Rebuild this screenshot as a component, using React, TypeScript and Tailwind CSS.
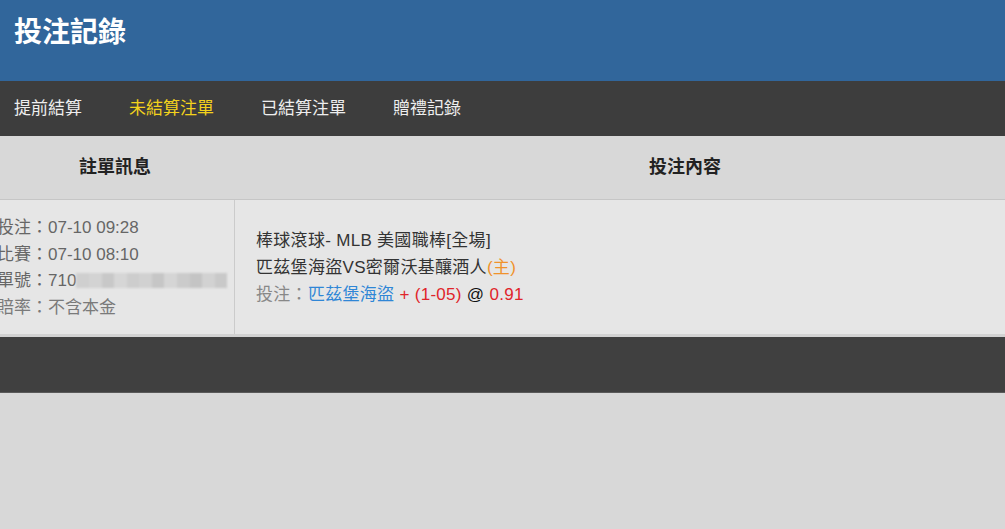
const cjk = '"Liberation Sans", "Noto Sans CJK TC", sans-serif';

const tabs = [
  { label: '提前結算', active: false },
  { label: '未結算注單', active: true },
  { label: '已結算注單', active: false },
  { label: '贈禮記錄', active: false },
];

const blurShades = ['#cfcfcf', '#d3d3d3', '#c8c8c8', '#d6d6d6', '#cdcdcd', '#d1d1d1', '#c6c6c6', '#d5d5d5', '#cbcbcb', '#c4c4c4', '#d2d2d2', '#c9c9c9'];

function Blurred() {
  return (
    <span className="inline-flex h-[15px] w-[151px] align-[-2px] blur-[1px]">
      {blurShades.map((c, i) => (
        <span key={i} className="h-full flex-1" style={{ backgroundColor: c }} />
      ))}
    </span>
  );
}

export default function App() {
  return (
    <div lang="zh-Hant" className="min-h-[529px] w-full overflow-hidden bg-[#d8d8d8]" style={{ fontFamily: cjk }}>
      <header className="h-[81px] bg-[#31669b] pl-[14px] pt-[19px]">
        <h1 className="text-[28px] font-bold leading-[28px] text-white">投注記錄</h1>
      </header>

      <nav className="flex h-[55px] items-center gap-[47px] bg-[#3d3d3d] pl-[14px]">
        {tabs.map((t) => (
          <span
            key={t.label}
            className={t.active ? 'text-[17px] text-[#f3d21c]' : 'text-[17px] text-[#eeeeee]'}
          >
            {t.label}
          </span>
        ))}
      </nav>

      <div className="-ml-[5px] w-[1140px]">
        <div className="flex h-[64px] items-center border-b border-[#c6c6c6] bg-[#d8d8d8] text-[18px] font-bold text-[#222]">
          <div className="w-[240px] text-center">註單訊息</div>
          <div className="flex-1 text-center">投注內容</div>
        </div>

        <div className="flex h-[137px] border-b-[3px] border-[#d2d2d2] bg-[#e6e6e6]">
          <div className="flex w-[240px] flex-col justify-center border-r border-[#cbcbcb] pl-[2px] pt-[2px] text-[17px] leading-[26.5px] text-[#666]">
            <div>投注：07-10 09:28</div>
            <div>比賽：07-10 08:10</div>
            <div>
              單號：710
              <Blurred />
            </div>
            <div className="text-[#7a7a7a]">賠率：不含本金</div>
          </div>
          <div className="flex flex-1 flex-col justify-center pl-[21px] pt-[1px] text-[17px] leading-[27px] tracking-[0.3px] text-[#333]">
            <div>棒球滾球- MLB 美國職棒[全場]</div>
            <div>
              匹茲堡海盜VS密爾沃基釀酒人<span className="text-[#f0922b]">(主)</span>
            </div>
            <div>
              <span className="text-[#888]">投注：</span>
              <span className="text-[#2f86d6]">匹茲堡海盜</span>
              <span className="text-[#e0242a]"> + (1-05)</span>
              <span className="text-[#111]"> @ </span>
              <span className="text-[#e0242a]">0.91</span>
            </div>
          </div>
        </div>
      </div>

      <div className="h-[56px] border-b border-[#5a5a5a] bg-[#404040]" />
    </div>
  );
}
